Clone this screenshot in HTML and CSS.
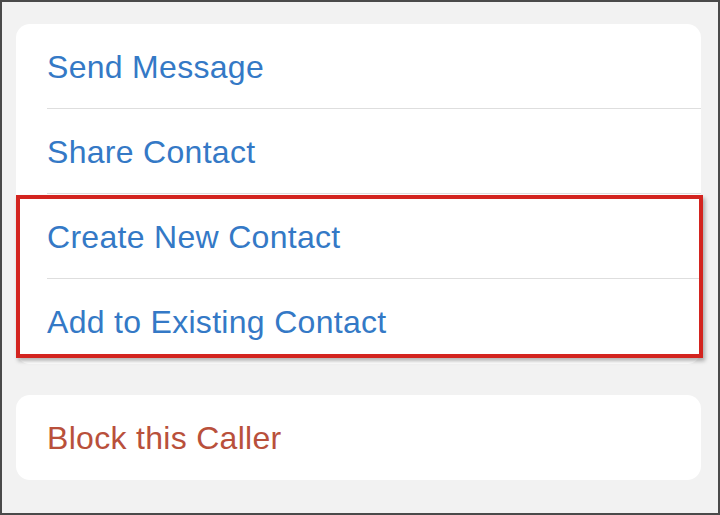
FILE: index.html
```html
<!DOCTYPE html>
<html>
<head>
<meta charset="utf-8">
<link rel="stylesheet" href="styles.css">
</head>
<body>
<div class="frame">
  <div class="card main">
    <div class="row blue">Send Message</div>
    <div class="row blue">Share Contact</div>
    <div class="row blue">Create New Contact</div>
    <div class="row blue last">Add to Existing Contact</div>
    <div class="highlight"></div>
  </div>
  <div class="card second">
    <div class="row red last">Block this Caller</div>
  </div>
</div>
</body>
</html>
```
FILE: styles.css
```css
html, body {
  margin: 0;
  padding: 0;
}
body {
  width: 720px;
  height: 515px;
  overflow: hidden;
  font-family: "Liberation Sans", Arial, sans-serif;
}
.frame {
  box-sizing: border-box;
  width: 720px;
  height: 515px;
  border: 2px solid #4a4a4a;
  background: #f2f2f2;
  padding: 22px 17px 0 14px;
  display: flex;
  flex-direction: column;
  gap: 31px;
}
.card {
  background: #ffffff;
  border-radius: 14px;
  position: relative;
}
.row {
  height: 85px;
  display: flex;
  align-items: center;
  padding-top: 2px;
  margin-left: 31px;
  font-size: 32px;
  letter-spacing: 0.3px;
  border-bottom: 1px solid #dedede;
  box-sizing: border-box;
}
.row.last {
  border-bottom: none;
}
.blue {
  color: #3479c6;
}
.red {
  color: #b9503b;
}
.highlight {
  position: absolute;
  left: 0;
  top: 171px;
  width: 687px;
  height: 163px;
  box-sizing: border-box;
  border: 4px solid #d3241f;
  box-shadow: 2px 3px 4px rgba(0, 0, 0, 0.3);
}
```
